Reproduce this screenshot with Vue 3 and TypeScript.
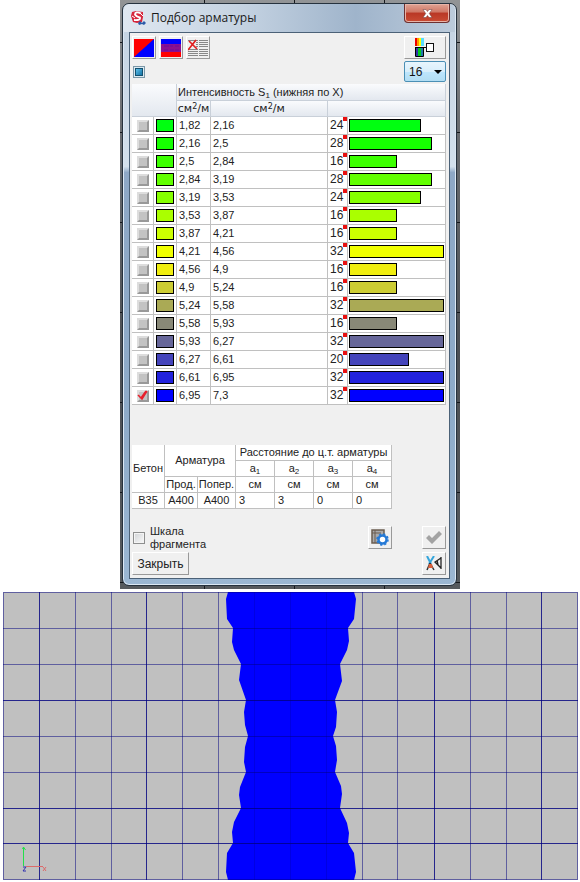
<script setup lang="ts">
import { ref } from 'vue'

interface Level {
  from: string
  to: string
  diameter: number
  color: string
  checked: boolean
}

const levels = ref<Level[]>([
  { from: '1,82', to: '2,16', diameter: 24, color: '#00ff10', checked: false },
  { from: '2,16', to: '2,5', diameter: 28, color: '#16ff00', checked: false },
  { from: '2,5', to: '2,84', diameter: 16, color: '#3cff00', checked: false },
  { from: '2,84', to: '3,19', diameter: 28, color: '#62ff00', checked: false },
  { from: '3,19', to: '3,53', diameter: 24, color: '#86ff00', checked: false },
  { from: '3,53', to: '3,87', diameter: 16, color: '#aaff00', checked: false },
  { from: '3,87', to: '4,21', diameter: 16, color: '#ccff00', checked: false },
  { from: '4,21', to: '4,56', diameter: 32, color: '#f0ff00', checked: false },
  { from: '4,56', to: '4,9', diameter: 16, color: '#f0ee10', checked: false },
  { from: '4,9', to: '5,24', diameter: 16, color: '#cccc33', checked: false },
  { from: '5,24', to: '5,58', diameter: 32, color: '#aaaa55', checked: false },
  { from: '5,58', to: '5,93', diameter: 16, color: '#888877', checked: false },
  { from: '5,93', to: '6,27', diameter: 32, color: '#666699', checked: false },
  { from: '6,27', to: '6,61', diameter: 20, color: '#4444bb', checked: false },
  { from: '6,61', to: '6,95', diameter: 32, color: '#2222dd', checked: false },
  { from: '6,95', to: '7,3', diameter: 32, color: '#0000ff', checked: true },
])

const count = ref('16')
const fragmentScale = ref(false)

// Bar length in px: a small base plus about 3 px per millimetre of diameter
const barWidth = (d: number) => `${Math.round(d * 2.9 + 2)}px`

const thinV = [75, 111, 182, 218, 254, 290, 326, 362, 397, 470, 506]
const boldV = [39, 146, 434, 541]
const thinH = [628, 664, 736, 772]
const boldH = [700, 808, 843]
const zone =
  'M228 592L226 599L227 619L233 628L232 642L234 650L241 664L239 680L246 700L244 712L245 725L248 736L245 747L244 762L246 772L240 787L239 795L241 808L234 822L232 832L233 843L227 853L226 872L228 880H354L356 872L354 853L348 843L349 833L347 823L340 808L342 794L341 786L335 772L337 760L336 746L333 736L336 727L337 712L335 700L342 681L340 664L347 650L349 641L348 628L354 619L356 599L354 592Z'
</script>

<template>
  <main class="page">
    <div class="backdrop">
      <section class="window" aria-labelledby="title">
        <header class="titlebar">
          <svg class="logo" width="15" height="15" viewBox="0 0 15 15" aria-hidden="true">
            <path d="M1 1L5 0L12 1L12 6L11 11L6 12L2 11L0 5Z" fill="#d7263c" />
            <path d="M10 2.500Q4 0 4 3.500Q5 5.500 9 6.500Q10 9.500 3 9" fill="none" stroke="#fff" stroke-width="1.800" />
            <path d="M1 5L4 7M9 2L12 5" fill="none" stroke="#fff" />
            <path d="M7 12L9 10L11 12L13 10L15 12L13 14L11 13L8 14Z" fill="#2c5aa8" />
          </svg>
          <h1 id="title">Подбор арматуры</h1>
          <button class="close" type="button" aria-label="Закрыть окно">
            <svg width="11" height="9" viewBox="0 0 11 9">
              <path d="M1 .5H4L5.500 2.500L7 .5H10L7.300 4.500L10 8.500H7L5.500 6.500L4 8.500H1L3.700 4.500Z" fill="#fff" stroke="#6b3a3a" stroke-width=".5" />
            </svg>
          </button>
        </header>

        <div class="client">
          <div class="bar">
            <div class="tools">
              <button class="btn tool" type="button" aria-label="Двухцветная шкала">
                <svg width="20" height="18" viewBox="0 0 20 18">
                  <rect width="20" height="18" fill="#00f" />
                  <path d="M0 0H20L0 18Z" fill="#f00" />
                </svg>
              </button>
              <button class="btn tool" type="button" aria-label="Диапазон шкалы">
                <svg width="20" height="18" viewBox="0 0 20 18">
                  <rect width="20" height="18" fill="#f00" />
                  <rect width="20" height="5" fill="#00f" />
                  <rect y="5" width="20" height="8" fill="#8b1090" />
                  <path d="M3 7H8M9 7H12M14 7H18M3 11H7M9 11H13M14 11H18" stroke="#6a0a9c" />
                </svg>
              </button>
              <button class="btn tool" type="button" aria-label="Удалить таблицу">
                <svg width="20" height="18" viewBox="0 0 20 18">
                  <path d="M0 1.500H20M8 3.500H20M8 5.500H20M8 7.500H20M0 10.500H20M0 12.500H20M0 14.500H20M0 16.500H20" stroke="#888" />
                  <path d="M10.500 1V17" stroke="#f0f0f0" />
                  <path d="M1 2L9 10M8 1L0 11" stroke="#e02020" stroke-width="1.700" fill="none" />
                </svg>
              </button>
            </div>
            <button class="btn wide" type="button" aria-label="Параметры цветовой шкалы">
              <svg width="20" height="19" viewBox="0 0 20 19">
                <rect width="2" height="8" fill="#e00" />
                <rect x="2" width="2" height="8" fill="#f90" />
                <rect x="4" width="2" height="8" fill="#ff0" />
                <rect x="6" width="3" height="8" fill="#5df" />
                <rect y="10" width="3" height="8" fill="#33a" />
                <rect x="3" y="10" width="3" height="8" fill="#0c2" />
                <rect x="6" y="10" width="2" height="8" fill="#27a" />
                <path d="M.5 10V18.500H8.500V10M0 9.500H11" fill="none" stroke="#000" />
                <rect x="11.500" y="5.500" width="7" height="8" fill="#fff" stroke="#111" />
              </svg>
            </button>
          </div>

          <div class="bar second">
            <button class="all" type="button" aria-label="Выбрать все"><span></span></button>
            <div class="combo">
              <select v-model="count" aria-label="Количество уровней">
                <option>8</option>
                <option>16</option>
                <option>32</option>
              </select>
              <svg width="8" height="4" viewBox="0 0 8 4" aria-hidden="true"><path d="M0 0H8L4 4Z" fill="#000" /></svg>
            </div>
          </div>

          <table class="levels">
            <colgroup>
              <col class="c-check" /><col class="c-color" /><col class="c-from" /><col class="c-to" /><col class="c-dia" /><col />
            </colgroup>
            <thead>
              <tr>
                <th colspan="2" rowspan="2"></th>
                <th colspan="4" class="left">Интенсивность S<sub>1</sub> (нижняя по X)</th>
              </tr>
              <tr>
                <th>см<sup>2</sup>/м</th>
                <th>см<sup>2</sup>/м</th>
                <th colspan="2"></th>
              </tr>
            </thead>
            <tbody>
              <tr v-for="l in levels" :key="l.from">
                <td class="check">
                  <label>
                    <input v-model="l.checked" type="checkbox" :aria-label="`${l.from} – ${l.to}`" />
                    <svg v-if="l.checked" width="11" height="11" viewBox="0 0 11 11" aria-hidden="true">
                      <path d="M1 5L4 8L9 1M2 6L5 9L10 1" fill="none" stroke="#e8202c" stroke-width="1.500" />
                    </svg>
                  </label>
                </td>
                <td class="color"><i :style="{ backgroundColor: l.color }"></i></td>
                <td>{{ l.from }}</td>
                <td>{{ l.to }}</td>
                <td class="dia">{{ l.diameter }}<b></b></td>
                <td class="length"><i :style="{ backgroundColor: l.color, width: barWidth(l.diameter) }"></i></td>
              </tr>
            </tbody>
          </table>

          <table class="material">
            <colgroup>
              <col class="m-concrete" /><col class="m-long" /><col class="m-cross" />
              <col class="m-dist" /><col class="m-dist" /><col class="m-dist" /><col class="m-dist" />
            </colgroup>
            <thead>
              <tr>
                <th rowspan="3">Бетон</th>
                <th rowspan="2" colspan="2">Арматура</th>
                <th colspan="4">Расстояние до ц.т. арматуры</th>
              </tr>
              <tr>
                <th v-for="n in 4" :key="n">a<sub>{{ n }}</sub></th>
              </tr>
              <tr>
                <th>Прод.</th>
                <th>Попер.</th>
                <th v-for="n in 4" :key="n">см</th>
              </tr>
            </thead>
            <tbody>
              <tr>
                <td class="center">B35</td>
                <td class="center">A400</td>
                <td class="center">A400</td>
                <td>3</td>
                <td>3</td>
                <td>0</td>
                <td>0</td>
              </tr>
            </tbody>
          </table>

          <footer class="footer">
            <div class="bar">
              <label class="scale">
                <input v-model="fragmentScale" type="checkbox" />
                <span>Шкала фрагмента</span>
              </label>
              <div class="actions">
                <button class="btn tool" type="button" aria-label="Настройки">
                  <svg width="18" height="17" viewBox="0 0 18 17">
                    <rect x="1" y="1" width="12" height="13" fill="#aaa" stroke="#6b5d50" stroke-width="1.500" />
                    <path d="M1 4H10M4 1V14" stroke="#6b5d50" />
                    <circle cx="11.500" cy="10.500" r="4" fill="#fff" stroke="#2479d6" stroke-width="2.500" />
                    <circle cx="11.500" cy="10.500" r="5.500" fill="none" stroke="#2479d6" stroke-width="1.500" stroke-dasharray="2.200 2.120" />
                  </svg>
                </button>
                <button class="btn tool" type="button" aria-label="Применить" disabled>
                  <svg width="18" height="15" viewBox="0 0 18 15">
                    <path d="M1 8L4 5L7 8L14 1L17 4L7 14Z" fill="#a3a3a3" />
                  </svg>
                </button>
              </div>
            </div>
            <div class="bar">
              <button class="btn dismiss" type="button">Закрыть</button>
              <button class="btn tool" type="button" aria-label="Отсечение">
                <svg width="16" height="15" viewBox="0 0 16 15">
                  <path d="M1 0L5 8M8 0L3 8" stroke="#35a6dc" stroke-width="2" />
                  <path d="M4 7L1 14M4 7L8 14" stroke="#333" stroke-width="1.500" />
                  <path d="M3 8H6L7 12H2Z" fill="#d9603c" />
                  <path d="M15 1V13M15 2L9 6L15 12M11 4L12 9" fill="none" stroke="#222" stroke-width="1.300" />
                </svg>
              </button>
            </div>
          </footer>
        </div>
      </section>
    </div>

    <svg class="map" viewBox="3 592 575 288" role="img" aria-label="Изополя армирования">
      <rect x="3" y="592" width="575" height="288" fill="#c0c0c0" />
      <path :d="zone" fill="#00f" />
      <g stroke="#000080">
        <path v-for="x in thinV" :key="`v${x}`" :d="`M${x}.5 592V880`" :opacity="x > 240 && x < 350 ? 0.22 : 0.5" />
        <path v-for="y in thinH" :key="`h${y}`" :d="`M3 ${y}.5H578`" opacity=".5" />
        <path v-for="x in boldV" :key="`w${x}`" :d="`M${x}.5 592V880`" opacity=".8" />
        <path v-for="y in boldH" :key="`b${y}`" :d="`M3 ${y}.5H578`" opacity=".8" />
        <rect x="3.500" y="592.500" width="574" height="287" fill="none" opacity=".5" />
      </g>
      <path d="M23.500 866V847M22.500 849L23.500 847L25.500 850" fill="none" stroke="#22e04a" />
      <path d="M26 866.500H43M43 867L46 871M46 867L43 871" fill="none" stroke="#dc6a6a" />
      <path d="M23 867H26L23 871H26" fill="none" stroke="#3030b0" />
    </svg>
  </main>
</template>

<style>
body {
  background: #fff;
}
</style>

<style scoped>
* {
  box-sizing: border-box;
}
.page {
  display: flex;
  flex-direction: column;
  align-items: center;
  gap: 3px;
  font: 11px/14px 'Liberation Sans', Arial, sans-serif;
  color: #222;
}
.backdrop {
  width: 100%;
  max-width: 340px;
  padding: 3px 3px 3px 2px;
  background:
    linear-gradient(90deg, #15181c 1px, transparent 1px) 84px 0 / 90px 100%,
    linear-gradient(#15181c 1px, transparent 1px) 0 42px / 100% 90px,
    linear-gradient(#929496, #6b6e72 20%, #4c4f54 60%, #565a5e);
}
.window {
  padding: 0 6px 6px;
  border: 1px solid #26323e;
  border-radius: 7px;
  background: linear-gradient(#c3d2e2, #d3e0ec 28%, #8ea8c6 29%, #8eabc9 70%, #9bb7d3);
  box-shadow: inset 0 0 0 1px #dce8f4;
}
.titlebar {
  display: flex;
  align-items: center;
  gap: 5px;
  height: 28px;
  margin: 0 -5px;
  padding: 0 5px;
  border-radius: 6px 6px 0 0;
  background: linear-gradient(90deg, #dfe7f0, #c5d3e2 35%, #9fb4cb 70%, #bccbdb);
}
.titlebar h1 {
  flex: 1;
  margin: 0;
  font: 12px/18px 'Open Sans', 'Noto Sans', sans-serif;
  color: #1a1a1a;
}
.logo {
  margin-left: 2px;
}
.close {
  display: grid;
  place-items: center;
  align-self: flex-start;
  width: 46px;
  height: 19px;
  padding: 0;
  border: 1px solid #6d3030;
  border-top: 0;
  border-radius: 0 0 4px 4px;
  background: linear-gradient(#dfa394, #cf7765 45%, #b93725 50%, #c94c34);
  box-shadow: inset 0 0 0 1px #e7b4a8;
}
.client {
  padding: 3px 3px 3px 2px;
  border: 1px solid #4b6177;
  background: #f0f0f0;
}
.bar {
  display: flex;
  justify-content: space-between;
  align-items: center;
}
.tools {
  display: flex;
  gap: 3px;
}
.btn {
  display: grid;
  place-items: center;
  height: 23px;
  padding: 0;
  border: 1px solid;
  border-color: #fff #999 #999 #fff;
  background: #f0f0f0;
  font: inherit;
  color: inherit;
}
.tool {
  width: 24px;
}
.wide {
  width: 42px;
}
.second {
  height: 25px;
}
.all {
  display: grid;
  place-items: center;
  width: 12px;
  height: 12px;
  margin: 0 1px;
  padding: 0;
  border: 1px solid #7b98a8;
  background: #dceaf2;
}
.all span {
  width: 8px;
  height: 8px;
  border: 1px solid #14506e;
  background: linear-gradient(135deg, #5fc0ea, #1272a4);
}
.combo {
  display: grid;
  align-items: center;
}
.combo > * {
  grid-area: 1 / 1;
}
.combo select {
  appearance: none;
  width: 42px;
  height: 21px;
  padding: 0 4px;
  border: 1px solid #4b8fb5;
  border-radius: 2px;
  background: linear-gradient(#e8f5fd, #d8eefb 50%, #bee6fd 51%, #b2ddf3);
  font: inherit;
  font-size: 12px;
  color: #111;
}
.combo svg {
  justify-self: end;
  margin-right: 4px;
  pointer-events: none;
}
table {
  border-spacing: 0;
  table-layout: fixed;
  background: #fff;
}
th,
td {
  padding: 0;
  border: solid #c0c0c0;
  border-width: 0 1px 1px 0;
  font-weight: normal;
  white-space: nowrap;
}
sub,
sup {
  font-size: 8px;
  line-height: 0;
}
sub {
  vertical-align: -2px;
}
sup {
  vertical-align: 3px;
}
.levels {
  width: 100%;
}
.levels th {
  height: 16px;
  border-color: #c9d0d9;
  background: linear-gradient(#fafbfd, #e3e8ef);
  font: 11px/15px 'DejaVu Sans', Verdana, sans-serif;
}
.levels thead tr:first-child th {
  height: 17px;
}
.levels .left {
  padding-left: 1px;
  font: 11px/16px 'Liberation Sans', Arial, sans-serif;
  text-align: left;
}
.levels td {
  height: 18px;
  padding-left: 2px;
  line-height: 17px;
}
.c-check {
  width: 22px;
}
.c-color {
  width: 23px;
}
.c-from {
  width: 34px;
}
.c-to {
  width: 117px;
}
.c-dia {
  width: 20px;
}
.levels .check {
  padding: 0;
}
.check label {
  display: grid;
  justify-content: center;
  align-items: center;
}
.check label > * {
  grid-area: 1 / 1;
}
.check svg {
  pointer-events: none;
}
.check input {
  appearance: none;
  width: 12px;
  height: 12px;
  margin: 0;
  border: 2px solid;
  border-color: #ddd #999 #999 #ddd;
  background: #c3c3c3;
}
.color i,
.length i {
  display: block;
  height: 13px;
  border: 1px solid #000;
}
.color i {
  width: 18px;
}
.levels .length {
  padding-left: 1px;
}
.levels .dia {
  position: relative;
  font-size: 12px;
}
.dia b {
  position: absolute;
  top: 0;
  right: 0;
  width: 4px;
  height: 4px;
  background: #e81010;
}
.material {
  width: 260px;
  margin-top: 40px;
}
.material th,
.material td {
  height: 16px;
  line-height: 15px;
}
.material th {
  text-align: center;
}
.material td {
  padding-left: 3px;
}
.material .center {
  padding: 0;
  text-align: center;
}
.m-concrete {
  width: 33px;
}
.m-long {
  width: 33px;
}
.m-cross {
  width: 38px;
}
.m-dist {
  width: 39px;
}
.footer {
  display: grid;
  gap: 3px;
  margin-top: 17px;
}
.scale {
  display: flex;
  align-items: center;
  gap: 5px;
  height: 23px;
  padding-left: 1px;
  line-height: 13px;
}
.scale span {
  width: 64px;
}
.scale input {
  appearance: none;
  width: 12px;
  height: 12px;
  margin: 0;
  border: 1px solid #8e8f8f;
  background: linear-gradient(135deg, #d0d3d6, #fafafa);
  box-shadow: inset 0 0 0 1px #f4f4f4;
}
.actions {
  display: flex;
  gap: 30px;
}
.dismiss {
  width: 57px;
  font-size: 12px;
}
.map {
  display: block;
  width: calc(100% - 5px);
  height: auto;
}
</style>
